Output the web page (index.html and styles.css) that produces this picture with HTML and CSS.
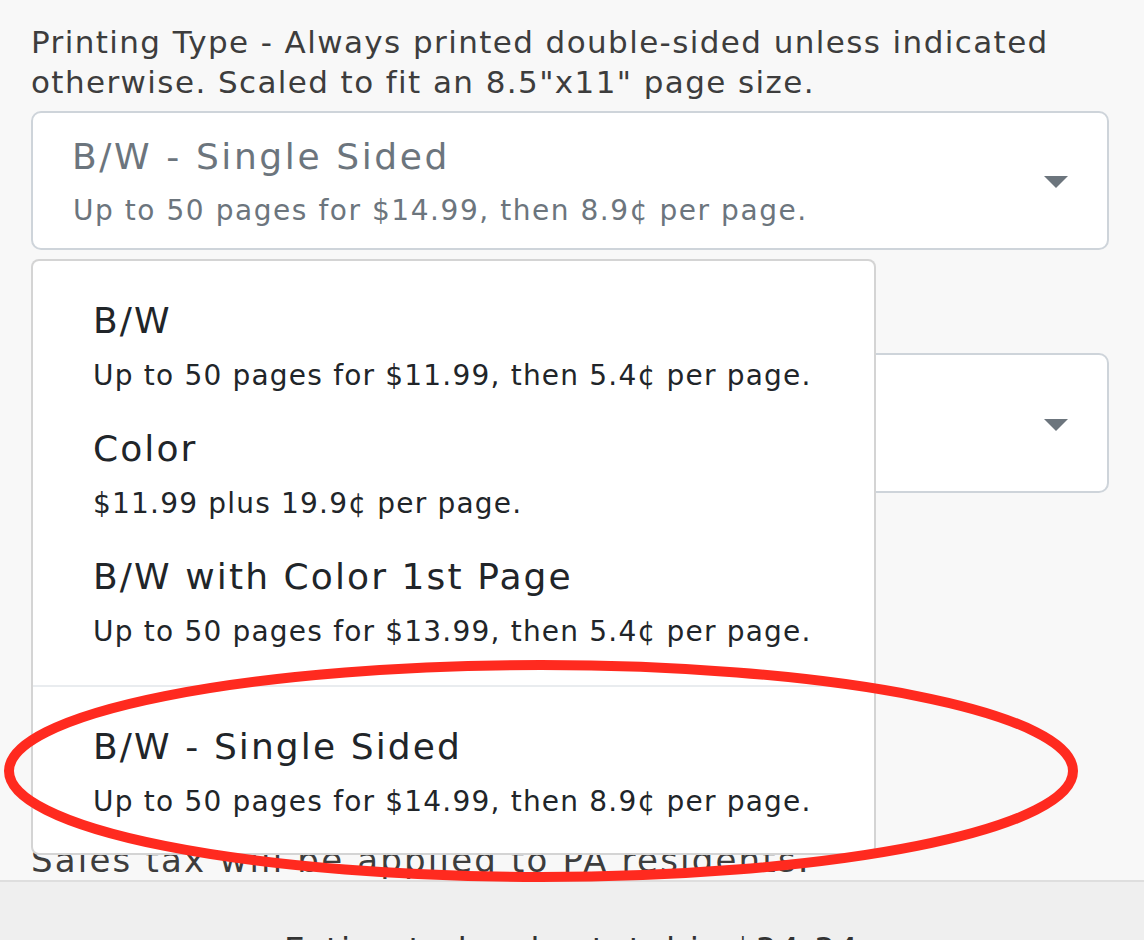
FILE: index.html
```html
<!DOCTYPE html>
<html lang="en">
<head>
<meta charset="utf-8">
<title>Printing Type</title>
<link rel="stylesheet" href="styles.css">
</head>
<body>
<div class="page">
  <main class="form">
    <label class="field-label">Printing Type - Always printed double-sided unless indicated otherwise. Scaled to fit an 8.5"x11" page size.</label>
    <div class="select-wrap">
      <div class="select">
        <div class="select-value">
          <div class="opt-title">B/W - Single Sided</div>
          <div class="opt-sub">Up to 50 pages for $14.99, then 8.9¢ per page.</div>
        </div>
        <span class="caret"></span>
      </div>
      <div class="dropdown">
        <div class="item">
          <div class="opt-title">B/W</div>
          <div class="opt-sub">Up to 50 pages for $11.99, then 5.4¢ per page.</div>
        </div>
        <div class="item">
          <div class="opt-title">Color</div>
          <div class="opt-sub">$11.99 plus 19.9¢ per page.</div>
        </div>
        <div class="item">
          <div class="opt-title">B/W with Color 1st Page</div>
          <div class="opt-sub">Up to 50 pages for $13.99, then 5.4¢ per page.</div>
        </div>
        <div class="divider"></div>
        <div class="item">
          <div class="opt-title">B/W - Single Sided</div>
          <div class="opt-sub">Up to 50 pages for $14.99, then 8.9¢ per page.</div>
        </div>
      </div>
    </div>
    <div class="select select-second">
      <div class="select-value"></div>
      <span class="caret"></span>
    </div>
    <div class="small-input"></div>
    <p class="note">Sales tax will be applied to PA residents.</p>
  </main>
  <footer class="footer">
    <p class="total">Estimated order total is $34.34</p>
  </footer>
  <svg class="annotation" width="1144" height="940" viewBox="0 0 1144 940">
    <ellipse cx="541" cy="771" rx="532" ry="106" fill="none" stroke="#ff2a1f" stroke-width="10"/>
  </svg>
</div>
</body>
</html>
```
FILE: styles.css
```css
* { box-sizing: border-box; }
html, body { margin: 0; padding: 0; }
body {
  background: #f8f8f8;
  font-family: "DejaVu Sans", "Open Sans", sans-serif;
  width: 1144px;
  height: 940px;
  overflow: hidden;
}
.page { position: relative; height: 940px; overflow: hidden; }
.form { padding: 22px 35px 0 31px; }
.field-label {
  display: block;
  font-size: 31px;
  line-height: 40px;
  letter-spacing: 1.4px;
  color: #3d3d3d;
}
.select-wrap { position: relative; margin-top: 9px; }
.select {
  position: relative;
  display: flex;
  align-items: center;
  justify-content: space-between;
  background: #fff;
  border: 2px solid #ced4da;
  border-radius: 10px;
  padding: 20px 40px 17px 40px;
  height: 139px;
}
.select-value { display: flex; flex-direction: column; }
.opt-title {
  font-size: 36px;
  line-height: 48px;
  letter-spacing: 2.1px;
  color: #212529;
  white-space: nowrap;
}
.opt-sub {
  font-size: 28px;
  line-height: 40px;
  letter-spacing: 1.2px;
  margin-top: 11px;
  color: #212529;
  white-space: nowrap;
}
.select .opt-title { color: #6c757d; letter-spacing: 2.6px; margin-left: -1px; }
.select .opt-sub { color: #6c757d; letter-spacing: 1.55px; margin-top: 10px; }
.caret {
  width: 0; height: 0;
  border-left: 12px solid transparent;
  border-right: 12px solid transparent;
  border-top: 12px solid #6c757d;
  margin-right: -1px;
}
.select-second { margin-top: 103px; height: 140px; }
.small-input {
  margin-top: 105px;
  width: 420px;
  height: 84px;
  border: 2px solid #ced4da;
  border-radius: 10px;
  background: #fff;
}
.note {
  margin: 158px 0 0;
  font-size: 34px;
  line-height: 40px;
  letter-spacing: 2.2px;
  color: #3d3d3d;
  white-space: nowrap;
}
.dropdown {
  position: absolute;
  top: calc(100% + 9px);
  left: 0;
  width: 845px;
  z-index: 10;
  background: #fff;
  border: 2px solid rgba(0,0,0,0.17);
  border-radius: 8px;
  padding: 20px 0 18px;
}
.item { padding: 16px 20px 13px 60px; }
.divider { height: 2px; background: #e9ecef; margin: 20px 0 20px; }
.footer {
  background: #efefef;
  border-top: 2px solid #dedede;
  height: 60px;
  padding-top: 49px;
}
.total {
  margin: 0;
  text-align: center;
  font-size: 33px;
  line-height: 40px;
  letter-spacing: 2px;
  color: #333;
  white-space: nowrap;
}
.annotation { position: absolute; left: 0; top: 0; z-index: 20; pointer-events: none; }
```
